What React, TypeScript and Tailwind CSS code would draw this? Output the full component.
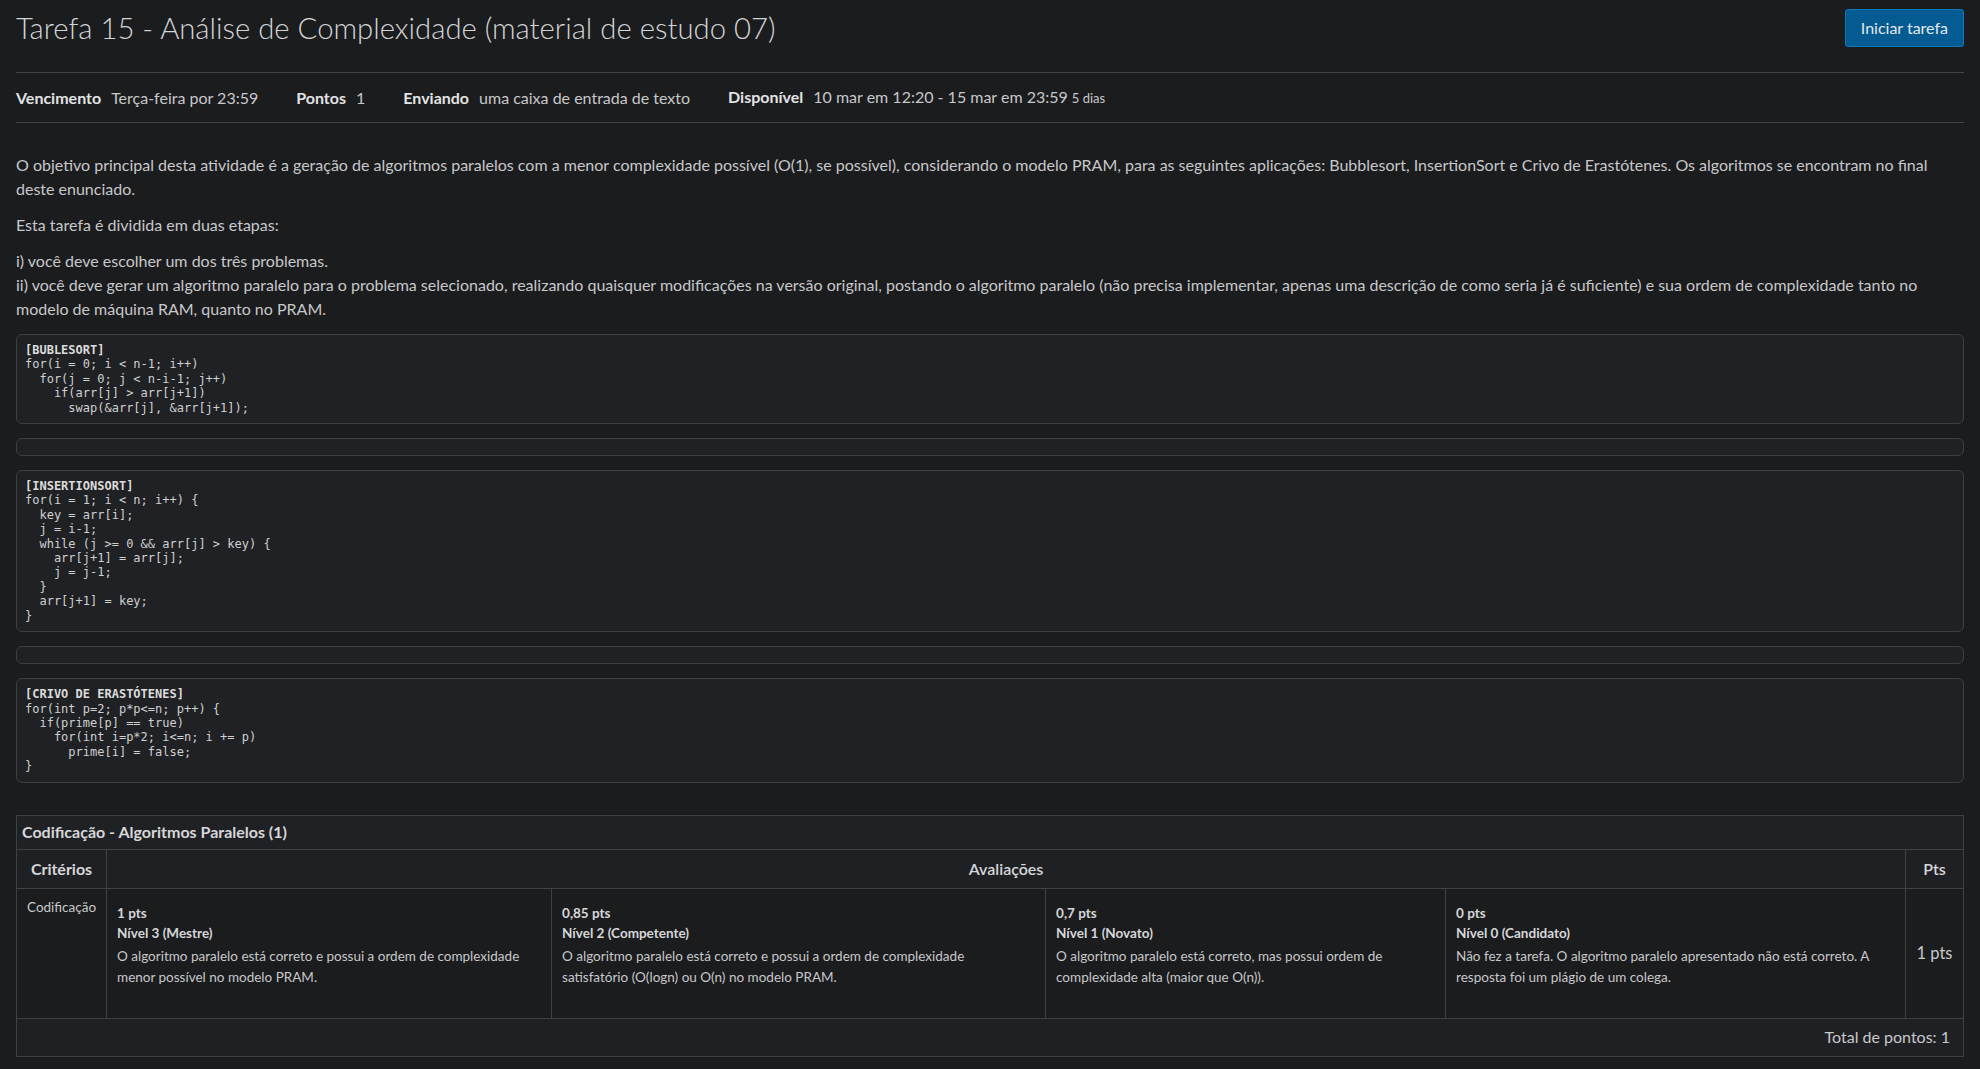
import React from "react";

const lato = { fontFamily: "Lato, 'Noto Sans', sans-serif" };

const codes = [
  {
    title: "[BUBLESORT]",
    body: `for(i = 0; i < n-1; i++)
  for(j = 0; j < n-i-1; j++)
    if(arr[j] > arr[j+1])
      swap(&arr[j], &arr[j+1]);`,
  },
  {
    title: "[INSERTIONSORT]",
    body: `for(i = 1; i < n; i++) {
  key = arr[i];
  j = i-1;
  while (j >= 0 && arr[j] > key) {
    arr[j+1] = arr[j];
    j = j-1;
  }
  arr[j+1] = key;
}`,
  },
  {
    title: "[CRIVO DE ERASTÓTENES]",
    body: `for(int p=2; p*p<=n; p++) {
  if(prime[p] == true)
    for(int i=p*2; i<=n; i += p)
      prime[i] = false;
}`,
  },
];

const ratings = [
  {
    pts: "1 pts",
    level: "Nível 3 (Mestre)",
    desc: "O algoritmo paralelo está correto e possui a ordem de complexidade menor possível no modelo PRAM.",
  },
  {
    pts: "0,85 pts",
    level: "Nível 2 (Competente)",
    desc: "O algoritmo paralelo está correto e possui a ordem de complexidade satisfatório (O(logn) ou O(n) no modelo PRAM.",
  },
  {
    pts: "0,7 pts",
    level: "Nível 1 (Novato)",
    desc: "O algoritmo paralelo está correto, mas possui ordem de complexidade alta (maior que O(n)).",
  },
  {
    pts: "0 pts",
    level: "Nível 0 (Candidato)",
    desc: "Não fez a tarefa. O algoritmo paralelo apresentado não está correto. A resposta foi um plágio de um colega.",
  },
];

function CodeBox({ title, body }: { title?: string; body?: string }) {
  return (
    <pre
      className="m-0 rounded-md border border-[#3d3f43] bg-[#202124] px-[8px] py-[8px] text-[12px] leading-[14.4px] text-[#cfd0d2] whitespace-pre"
      style={{ fontFamily: "'DejaVu Sans Mono', 'Liberation Mono', monospace" }}
    >
      {title && <b className="font-bold text-[#dcdcdc]">{title}</b>}
      {title && "\n"}
      {body}
    </pre>
  );
}

function Meta({ label, value, extra }: { label: string; value: string; extra?: string }) {
  return (
    <div className="flex items-baseline gap-[10px]">
      <span className="font-bold text-[#e2e3e4]">{label}</span>
      <span>
        {value}
        {extra && <span className="ml-[4px] text-[13px]">{extra}</span>}
      </span>
    </div>
  );
}

export default function App() {
  return (
    <div className="min-h-screen bg-[#1b1c1e] px-4 text-[#c7c8ca]" style={lato}>
      <div className="flex items-center justify-between pt-[9px] pb-[25px] border-b border-[#434548]">
        <h1 className="text-[29.3px] font-light leading-[38px] text-[#d3d4d6]">
          Tarefa 15 - Análise de Complexidade (material de estudo 07)
        </h1>
        <button className="h-[38px] rounded-[3px] border border-[#0d78bd] bg-[#035b91] px-[15px] text-[16px] text-[#e3e8ec]">
          Iniciar tarefa
        </button>
      </div>

      <div className="flex items-center gap-[38px] border-b border-[#434548] py-[14px] text-[16px] leading-[20px]">
        <Meta label="Vencimento" value="Terça-feira por 23:59" />
        <Meta label="Pontos" value="1" />
        <Meta label="Enviando" value="uma caixa de entrada de texto" />
        <Meta label="Disponível" value="10 mar em 12:20 - 15 mar em 23:59" extra="5 dias" />
      </div>

      <div className="pt-[30px] text-[16px] leading-[24px]">
        <p className="mb-[12px]">
          O objetivo principal desta atividade é a geração de algoritmos paralelos com a menor complexidade possível (O(1), se possível), considerando o modelo PRAM, para as seguintes aplicações: Bubblesort, InsertionSort e Crivo de Erastótenes. Os algoritmos se encontram no final deste enunciado.
        </p>
        <p className="mb-[12px]">Esta tarefa é dividida em duas etapas:</p>
        <p className="mb-[13px]">
          i) você deve escolher um dos três problemas.
          <br />
          ii) você deve gerar um algoritmo paralelo para o problema selecionado, realizando quaisquer modificações na versão original, postando o algoritmo paralelo (não precisa implementar, apenas uma descrição de como seria já é suficiente) e sua ordem de complexidade tanto no modelo de máquina RAM, quanto no PRAM.
        </p>
      </div>

      <div className="flex flex-col gap-[14px]">
        <CodeBox title={codes[0].title} body={codes[0].body} />
        <CodeBox />
        <CodeBox title={codes[1].title} body={codes[1].body} />
        <CodeBox />
        <CodeBox title={codes[2].title} body={codes[2].body} />
      </div>

      <table className="mt-[32px] w-full border-collapse border border-[#3f4245] text-[16px]">
        <colgroup>
          <col className="w-[90px]" />
          <col className="w-[445px]" />
          <col className="w-[494px]" />
          <col className="w-[400px]" />
          <col className="w-[460px]" />
          <col />
        </colgroup>
        <thead>
          <tr className="bg-[#202124]">
            <th colSpan={6} className="h-[34px] px-[5px] text-left font-bold text-[#d6d7d9]">
              Codificação - Algoritmos Paralelos (1)
            </th>
          </tr>
          <tr className="bg-[#1f2023]">
            <th className="h-[39px] border border-[#3f4245] font-bold text-[#d6d7d9]">Critérios</th>
            <th colSpan={4} className="border border-[#3f4245] font-semibold text-[#d6d7d9]">Avaliações</th>
            <th className="border border-[#3f4245] font-semibold text-[#d6d7d9]">Pts</th>
          </tr>
        </thead>
        <tbody>
          <tr className="h-[130px]">
            <td className="border border-[#3f4245] px-[10px] pt-[10px] align-top text-[13.5px] leading-[17px]">
              Codificação
            </td>
            {ratings.map((r) => (
              <td key={r.pts} className="border border-[#3f4245] align-top">
                <div className="flex h-[129px] flex-col pl-[10px] pr-[24px] pt-[14px] text-[#c7c8ca]">
                  <span className="text-[13.5px] font-bold leading-[20px] text-[#d6d7d9]">{r.pts}</span>
                  <span className="text-[13.5px] font-bold leading-[20px] text-[#d6d7d9]">{r.level}</span>
                  <span className="mt-[3px] text-[13.5px] leading-[21px]">{r.desc}</span>
                </div>
              </td>
            ))}
            <td className="border border-[#3f4245] text-center text-[16.5px]">1 pts</td>
          </tr>
          <tr className="bg-[#1f2023]">
            <td colSpan={6} className="h-[38px] border border-[#3f4245] pr-[13px] text-right">
              Total de pontos: 1
            </td>
          </tr>
        </tbody>
      </table>
      <div className="h-[12px]" />
    </div>
  );
}
